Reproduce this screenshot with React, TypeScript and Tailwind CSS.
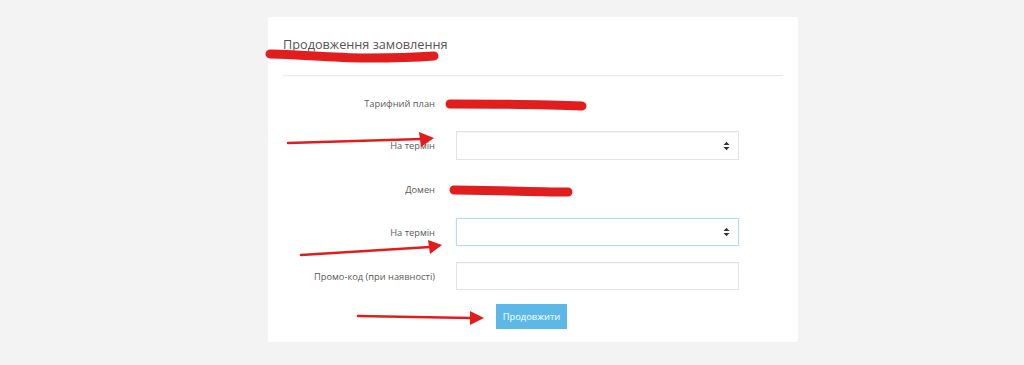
import React from "react";

const font = { fontFamily: '"Open Sans", "Noto Sans", sans-serif' };

function SelectArrows() {
  return (
    <svg width="7" height="10" viewBox="0 0 7 10" className="block">
      <path d="M0.5 4 L3.5 0.8 L6.5 4 Z" fill="#333" />
      <path d="M0.5 6 L3.5 9.2 L6.5 6 Z" fill="#333" />
    </svg>
  );
}

function Row({
  label,
  children,
  className,
}: {
  label: string;
  children: React.ReactNode;
  className: string;
}) {
  return (
    <div className={"flex items-center " + className}>
      <div className="w-[152px] text-right text-[9.3px] text-[#5a5a5a] pt-[1px]">{label}</div>
      <div className="ml-[21px] flex-none">{children}</div>
    </div>
  );
}

export default function App() {
  return (
    <div className="relative w-full h-[365px] bg-[#f3f3f3] overflow-hidden" style={font}>
      <div className="pt-[17px] pl-[268px]">
        <div className="w-[530px] bg-white rounded-[2px] pl-[15px] pr-[15px] pt-[17px] pb-[13px]">
          <div className="h-[21px] flex items-center text-[12.7px] text-[#555]">
            Продовження замовлення
          </div>
          <div className="h-[20px]" />
          <div className="h-[1px] bg-[#ebebeb] shadow-[0_1px_1px_rgba(0,0,0,0.03)]" />
          <Row label="Тарифний план" className="mt-[13px] h-[28px]">
            <div className="h-[28px]" />
          </Row>
          <Row label="На термін" className="mt-[14px] h-[29px]">
            <div className="w-[283px] h-[29px] border border-[#e3e3e3] bg-white flex items-center justify-end pr-[8px] shadow-[inset_0_1px_1px_rgba(0,0,0,0.04)]">
              <SelectArrows />
            </div>
          </Row>
          <Row label="Домен" className="mt-[15px] h-[28px]">
            <div className="h-[28px]" />
          </Row>
          <Row label="На термін" className="mt-[15px] h-[28px]">
            <div className="w-[283px] h-[28px] border border-[#b9dcef] bg-white flex items-center justify-end pr-[8px] shadow-[0_0_2px_rgba(102,175,233,0.25)]">
              <SelectArrows />
            </div>
          </Row>
          <Row label="Промо-код (при наявності)" className="mt-[16px] h-[28px]">
            <div className="w-[283px] h-[28px] border border-[#e3e3e3] bg-white shadow-[inset_0_1px_1px_rgba(0,0,0,0.04)]" />
          </Row>
          <div className="mt-[14px] h-[25px] flex">
            <div className="ml-[213px] w-[71px] h-[25px] bg-[#5cb9e7] text-white text-[9.3px] flex items-center justify-center">
              Продовжити
            </div>
          </div>
        </div>
      </div>

      <svg
        className="absolute left-0 top-0 pointer-events-none"
        width="1024"
        height="365"
        viewBox="0 0 1024 365"
      >
        <g fill="none" stroke="#e11d1d" strokeLinecap="round" strokeLinejoin="round">
          <path d="M270 54 C 310 55, 340 58, 370 58 S 420 57, 434 56" strokeWidth="9" />
          <path d="M450 104 C 490 104, 540 104, 582 106" strokeWidth="9" />
          <path d="M454 190 C 490 190, 530 192, 568 192" strokeWidth="9" />
          <path d="M288 143 L 422 139" strokeWidth="2.5" />
          <path d="M301 255 L 430 247" strokeWidth="2.5" />
          <path d="M358 316 L 471 318" strokeWidth="2.5" />
        </g>
        <g fill="#e11d1d">
          <path d="M434 138 L 419 132 L 421 147 Z" />
          <path d="M442 245 L 428 240 L 430 254 Z" />
          <path d="M484 318 L 470 311 L 470 325 Z" />
        </g>
      </svg>
    </div>
  );
}
